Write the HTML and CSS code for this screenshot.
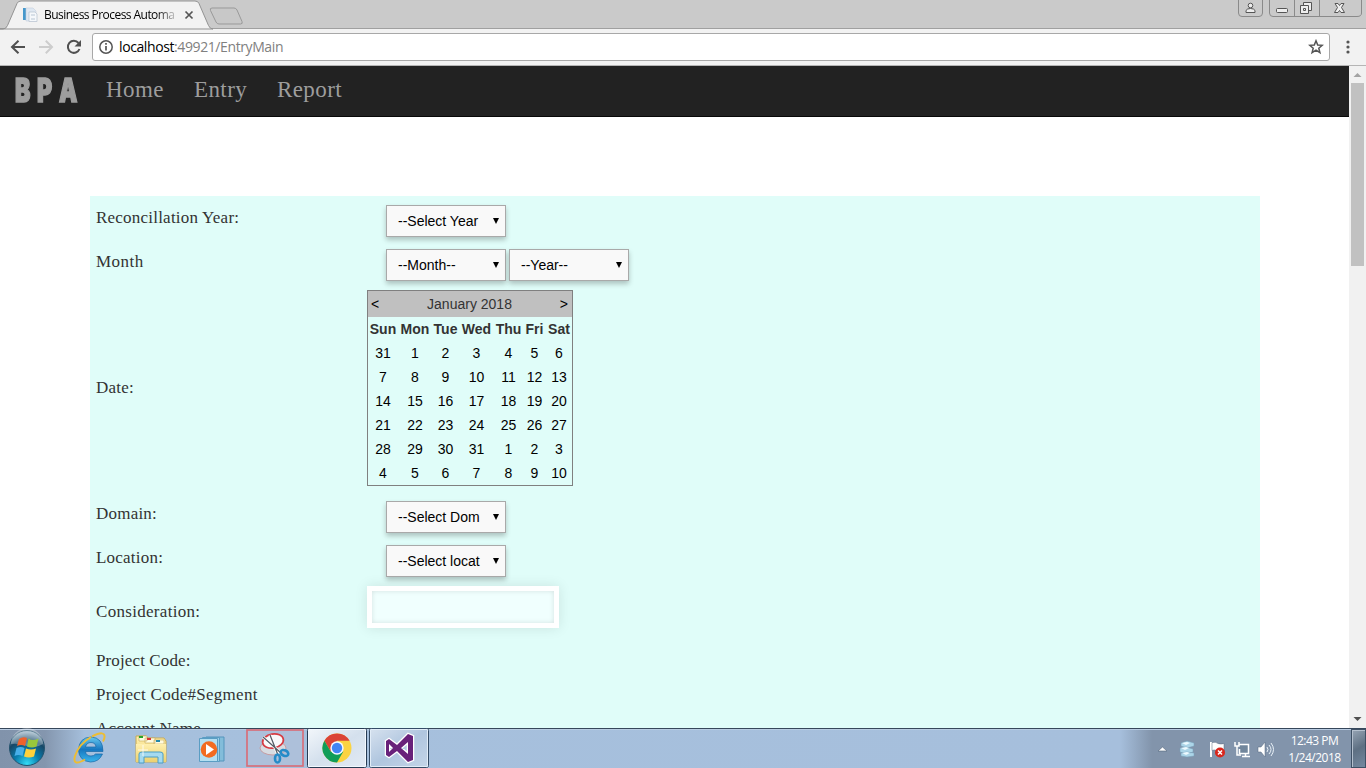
FILE: index.html
```html
<!DOCTYPE html>
<html lang="en">
<head>
<meta charset="utf-8">
<title>Business Process Automation</title>
<link rel="stylesheet" href="styles.css">
</head>
<body>
<div class="screen">
  <header class="tabstrip">
    <svg class="tab-shapes" width="250" height="28" viewBox="0 0 250 28">
      <path d="M0 28.5H3Q6 28.500 7.500 25L17 3Q18 .5 21 .5H195Q198 .5 199 3L208.500 25Q210 28.500 213 28.500Z" fill="#f2f2f2" stroke="#939393"/>
      <path d="M212 7.500H234Q236 7.500 237 9.500L242 21Q243 23.500 240.500 23.500H219Q217 23.500 216 21.500L210.500 10Q209.500 7.500 212 7.500Z" fill="#c8c8c8" stroke="#999"/>
    </svg>
    <div class="tab">
      <svg width="16" height="16" viewBox="0 0 16 16"><path d="M1 1h3v12H1z" fill="#4598cc"/><path d="M4 1h7l3 3v10H4z" fill="#dfe8f2" stroke="#c4cfdb" stroke-width=".6"/><path d="M8 5h5l2 2v7.500H7V5z" fill="#f5f8fb" stroke="#b6c2cf" stroke-width=".7"/><path d="M9 8h4M9 12h4" stroke="#b8c6d4"/></svg>
      <span class="tab-title">Business Process Automa</span>
      <svg class="tab-close" width="10" height="10" viewBox="0 0 10 10"><path d="M1.500 1.500l7 7M8.500 1.500l-7 7" stroke="#555" stroke-width="1.700"/></svg>
    </div>
    <svg class="window-buttons" width="130" height="18" viewBox="0 0 130 18">
      <path d="M3.500 -1V13Q3.500 16.500 7 16.500H24Q27.500 16.500 27.500 13V-1M34.500 -1V13Q34.500 16.500 38 16.500H122Q126.500 16.500 126.500 13V-1M59.500 0V16M84.500 0V16" fill="none" stroke="#8a8a8a"/>
      <g fill="#eee" stroke="#555"><circle cx="15.500" cy="5.500" r="2.300"/><path d="M11 12.500V10.500Q12 8.500 15.500 8.500T20 10.500V12.500Z"/><rect x="41.500" y="8.500" width="11" height="4" rx="1"/><path d="M68.500 2.500h8v8h-8z"/><path d="M65.500 5.500h8v8h-8z"/><path d="M68.500 8.500h2v2h-2z"/><path d="M100 3.500h3l1.500 2 1.500-2h3l-2.500 4 3 5h-3.500l-1.500-2-1.500 2h-3.500l3-5z"/></g>
    </svg>
  </header>
  <div class="toolbar">
    <svg class="nav-icons" width="92" height="37" viewBox="0 0 92 37">
      <g fill="none" stroke-width="2"><path d="M25 19H12.500M18.500 12.700L12 19L18.500 25.300" stroke="#505050"/><path d="M39 19H51.500M45.800 12.700L52 19L45.800 25.300" stroke="#cdcdcd"/><path d="M78.500 15A6 6 0 1 0 79.500 21" stroke="#505050"/></g><path d="M81 12v6.500h-6.500z" fill="#505050"/>
    </svg>
    <div class="address">
      <svg width="16" height="16" viewBox="0 0 16 16"><circle cx="8" cy="8" r="6.200" fill="none" stroke="#555" stroke-width="1.500"/><path d="M8 7v4.500M8 4v1.700" stroke="#555" stroke-width="1.700"/></svg>
      <span class="url"><b>localhost</b>:49921/EntryMain</span>
      <svg class="star" width="16" height="16" viewBox="0 0 16 16"><path d="M8 1.800l1.700 4.200 4.600.3-3.500 2.900 1.100 4.400L8 11.200l-3.900 2.400 1.100-4.400L1.700 6.300 6.300 6z" fill="none" stroke="#555" stroke-width="1.500"/></svg>
    </div>
    <svg class="menu" width="6" height="14" viewBox="0 0 6 14"><g fill="#555"><circle cx="3" cy="2" r="1.600"/><circle cx="3" cy="7" r="1.600"/><circle cx="3" cy="12" r="1.600"/></g></svg>
  </div>

  <div class="viewport">
    <main class="page">
      <nav class="navbar">
        <span class="brand"><span>B</span><span>P</span><span>A</span></span>
        <a class="home">Home</a><a class="entry">Entry</a><a class="report">Report</a>
      </nav>
      <section class="form">
        <div class="row"><label class="l-year">Reconcillation Year:</label><div class="selects"><div class="select"><span>--Select Year</span></div></div></div>
        <div class="row"><label class="l-month">Month</label><div class="selects"><div class="select"><span>--Month--</span></div><div class="select"><span>--Year--</span></div></div></div>
        <div class="row row-date"><label class="l-date">Date:</label>
          <div class="calendar">
            <div class="cal-head"><span>&lt;</span><span class="cal-title">January 2018</span><span>&gt;</span></div>
            <div class="cal-grid">
              <b>Sun</b><b>Mon</b><b>Tue</b><b>Wed</b><b>Thu</b><b>Fri</b><b>Sat</b>
              <i>31</i><i>1</i><i>2</i><i>3</i><i>4</i><i>5</i><i>6</i>
              <i>7</i><i>8</i><i>9</i><i>10</i><i>11</i><i>12</i><i>13</i>
              <i>14</i><i>15</i><i>16</i><i>17</i><i>18</i><i>19</i><i>20</i>
              <i>21</i><i>22</i><i>23</i><i>24</i><i>25</i><i>26</i><i>27</i>
              <i>28</i><i>29</i><i>30</i><i>31</i><i>1</i><i>2</i><i>3</i>
              <i>4</i><i>5</i><i>6</i><i>7</i><i>8</i><i>9</i><i>10</i>
            </div>
          </div>
        </div>
        <div class="row"><label class="l-domain">Domain:</label><div class="selects"><div class="select"><span>--Select Dom</span></div></div></div>
        <div class="row"><label class="l-location">Location:</label><div class="selects"><div class="select"><span>--Select locat</span></div></div></div>
        <div class="row row-text"><label class="l-cons">Consideration:</label><div class="textbox"></div></div>
        <div class="row row-short"><label class="l-code">Project Code:</label></div>
        <div class="row row-short"><label class="l-seg">Project Code#Segment</label></div>
        <div class="row row-short"><label class="l-acct">Account Name</label></div>
      </section>
    </main>
    <aside class="scrollbar">
      <svg width="17" height="17" viewBox="0 0 17 17"><path d="M4.500 11h8L8.500 7z" fill="#a3a3a3"/></svg>
      <div class="thumb"></div>
      <svg class="down" width="17" height="17" viewBox="0 0 17 17"><path d="M4.500 6h8l-4 4z" fill="#505050"/></svg>
    </aside>
  </div>

  <footer class="taskbar">
    <svg class="apps" width="440" height="40" viewBox="0 0 440 40">
      <defs>
        <radialGradient id="orb" cx=".5" cy=".95" r=".9"><stop offset="0" stop-color="#35dcf5"/><stop offset=".4" stop-color="#087cad"/><stop offset=".75" stop-color="#174766"/><stop offset="1" stop-color="#91adc0"/></radialGradient>
        <linearGradient id="btn" x2="1" y2="1"><stop offset="0" stop-color="#f3f7fb"/><stop offset=".5" stop-color="#d4e0ed"/><stop offset="1" stop-color="#e2eaf4"/></linearGradient>
        <linearGradient id="btn2" x2="1" y2="1"><stop offset="0" stop-color="#d7e2ef"/><stop offset=".5" stop-color="#b0c6df"/><stop offset="1" stop-color="#c4d5e8"/></linearGradient>
        <linearGradient id="folder" x2="0" y2="1"><stop offset="0" stop-color="#fff0af"/><stop offset="1" stop-color="#ecd16f"/></linearGradient>
        <linearGradient id="ie" x2="0" y2="1"><stop offset="0" stop-color="#67c9ef"/><stop offset=".5" stop-color="#1777c0"/><stop offset="1" stop-color="#39b5ec"/></linearGradient>
      </defs>
      <circle cx="27" cy="20" r="17.500" fill="url(#orb)" stroke="#24536e"/>
      <path d="M11 16A16 16 0 0 1 43 16Q35 21 27 18T11 16Z" fill="#fff" opacity=".3"/>
      <path d="M19 11q4-3 8-1l-2 8q-4-2-8 0z" fill="#ee622c"/><path d="M28.500 10.500q4 3 10 0l-2 8q-5 2-9.500 0z" fill="#99c83b"/><path d="M16.500 20q4-2 8 0l-2 8q-4-2-8 0z" fill="#48afe9"/><path d="M26 20.500q5 2 10 0l-2 8q-5 2-10 0z" fill="#ffd13b"/>
      <path fill-rule="evenodd" d="M103 23.500H85.500Q86 28 91 28Q94 28 95.500 26H102.500Q99 34 90.500 34Q79 33 78.500 22Q79 9.500 91 9Q103 9.500 103 23.500ZM85.500 19H96Q95.500 14.500 91 14.500Q86.500 14.500 85.500 19Z" fill="url(#ie)" stroke="#1767a6" stroke-width=".7"/><path d="M92 8.500Q105 2 104.500 9Q104.500 11 103 13.500M91 9Q79 16 75 28Q72 39 85 31.500" fill="none" stroke="#edbd34" stroke-width="2"/>
      <path d="M136 12V8H146L148 10H164L166 13V34H136Z" fill="url(#folder)" stroke="#c8aa54"/><path d="M139 8h8v5h-8zM145 10h10v5h-10zM154 12h10v4h-10z" fill="#fffbe0" stroke="#c8aa54" stroke-width=".6"/><path d="M139 8h4v2h-4z" fill="#28a528"/><path d="M147 10h4v2h-4z" fill="#d33"/><path d="M156 12h4v2h-4z" fill="#28a"/><path d="M136 16h30v18h-30z" fill="url(#folder)"/>
      <path d="M139 35V26Q139 24 142 24H160Q163 24 163 26V35H158V29H144V35Z" fill="#a5daef" stroke="#4b9ec6"/><path d="M143 17v11M138 22h10" stroke="#fff" opacity=".8"/>
      <path d="M206 9h18v24h-18z" fill="#83bdda" stroke="#5595bd"/><path d="M202.500 9.500h17v24h-17z" fill="#9bcee7" stroke="#5a9dc3"/><path d="M199.500 10.500h18v23h-18z" fill="#b4dff1" stroke="#5a9dc3"/><circle cx="209" cy="21.500" r="8.300" fill="#f26b20"/><path d="M206 16v11l8-5.500z" fill="#fff"/>
      <rect x="247" y="2" width="56" height="36" fill="#adc0da" stroke="#d66f7b" stroke-width="1.700"/>
      <ellipse cx="273" cy="20" rx="13" ry="7" fill="#d7dce2" stroke="#c69ca2"/><ellipse cx="273" cy="13" rx="10.500" ry="7" fill="#f8f9fa" stroke="#d63c43" stroke-width="1.700" transform="rotate(-10 273 13)"/><path d="M263 9L281 25M270 7L278 27" stroke="#fff" stroke-width="3"/><path d="M263 9L281 25M270 7L278 27" stroke="#555e67" stroke-width="1.300"/><g fill="none" stroke="#258bc8" stroke-width="2.600"><ellipse cx="284.500" cy="25" rx="4" ry="2.700" transform="rotate(25 284.500 25)"/><ellipse cx="277.500" cy="30.500" rx="2.500" ry="4"/></g>
      <rect x="307.500" y=".5" width="59" height="39" rx="2" fill="url(#btn)" stroke="#263b53"/><path d="M308.500 38.500V1.500H365.500V38.500Z" fill="none" stroke="#f3f8fe"/>
      <circle cx="337" cy="20" r="14.500" fill="#fbd341"/><path d="M324.400 12.700A14.500 14.500 0 0 1 349.600 12.700H337L330.700 23.600Z" fill="#db4437"/><path d="M324.400 12.700A14.500 14.500 0 0 0 337 34.500L343.300 23.600H330.700Z" fill="#109d58"/><circle cx="337" cy="20" r="6.700" fill="#f5f8ff"/><circle cx="337" cy="20" r="5.200" fill="#4285f4"/>
      <rect x="369.500" y=".5" width="59" height="39" rx="2" fill="url(#btn2)" stroke="#344c67"/><path d="M370.500 38.500V1.500H427.500V38.500Z" fill="none" stroke="#e2edf8"/>
      <path fill-rule="evenodd" d="M386 13L389 11L397 17L408 6L413 8V32L408 34L397 23L389 29L386 27ZM389 16V24L393 20ZM401 20L408 26V14Z" fill="#68217a" stroke="#fff" stroke-width="2.500" paint-order="stroke"/>
    </svg>
    <div class="tray">
      <svg class="tray-icons" width="130" height="39" viewBox="0 0 130 39">
        <path d="M13 22h9l-4.500-4z" fill="#fff" stroke="#53647a" stroke-width=".6"/>
        <path d="M36 14l6-2 7 2v3l-7 2-6-2zM35 19l6-1 7 2v3l-7 2-6-2zM36 24l6-1 7 1v3l-7 1-6-1z" fill="#acd5e8" stroke="#779fb8" stroke-width=".5"/><path d="M37 14l5-1 3 1-4 2zM36 19l5-1 3 1-4 2zM37 24l5-1 3 1-4 2z" fill="#edfaff"/>
        <path d="M66 13V28" stroke="#fff" stroke-width="2"/><path d="M67 13.500q4-1 6 1 3 1 6 0v8q-4 1-7-1-3-1-5 0z" fill="#fff" stroke="#53647a" stroke-width=".5"/><circle cx="75" cy="23.500" r="5" fill="#d9261c"/><path d="M73 21.500l4 4M77 21.500l-4 4" stroke="#fff" stroke-width="1.500"/>
        <path d="M94 15.500H103.500V24.500H94.500V20M97 27.500H105M100.500 25v2" fill="#71869c" stroke="#fff" stroke-width="1.500"/><path d="M90 13v4h4v-4M92 17v9h4" fill="none" stroke="#fff" stroke-width="1.500"/>
        <path d="M113 18h3l4-5v15l-4-5h-3z" fill="#fff" stroke="#52667e" stroke-width=".5"/><path d="M122 18q2 2.500 0 5M124 16q4 4.500 0 9M126 14q5 6.500 0 13" fill="none" stroke="#eaf2f8"/>
      </svg>
      <div class="clock"><span>12:43 PM</span><span>1/24/2018</span></div>
      <div class="desktop-button"></div>
    </div>
  </footer>
</div>
</body>
</html>
```
FILE: styles.css
```css
* { box-sizing: border-box; }
body { margin: 0; overflow: hidden; font-family: "Liberation Sans", Arial, sans-serif; }
svg { display: block; flex: none; }
.screen { width: 1366px; height: 768px; display: flex; flex-direction: column; overflow: hidden; }

.tabstrip { height: 29px; flex: none; background: #cacaca; border-bottom: 1px solid #a0a0a0; display: flex; justify-content: space-between; position: relative; }
.tab-shapes { position: absolute; left: 0; top: 0; height: 29px; overflow: visible; }
.tab { position: relative; width: 200px; height: 28px; padding: 1px 0 0 22px; display: flex; align-items: center; }
.tab-title { width: 133px; margin-left: 6px; white-space: nowrap; -webkit-mask-image: linear-gradient(90deg, #000 112px, transparent 136px); mask-image: linear-gradient(90deg, #000 112px, transparent 136px); font: 12px/18px "Open Sans", sans-serif; letter-spacing: -.55px; }
.tab-close { margin-left: 7px; }
.window-buttons { margin-right: 1px; }

.toolbar { height: 37px; flex: none; background: #f2f2f2; border-bottom: 1px solid #b5b5b5; display: flex; }
.nav-icons { margin-top: -1px; }
.address { width: 1238px; height: 28px; margin-top: 4px; border: 1px solid #a8a8a8; border-radius: 3px; background: #fff; display: flex; align-items: center; padding: 0 5px; }
.url { margin-left: 5px; flex: 1; color: #808080; font: 14px/20px "Open Sans", sans-serif; letter-spacing: -.4px; }
.url b { color: #000; font-weight: 400; }
.menu { margin: 11px 0 0 15px; }

.viewport { flex: 1; min-height: 0; display: flex; }
.page { width: 1349px; height: 662px; overflow: hidden; background: #fff; }
.navbar { height: 51px; background: #222; border-bottom: 1px solid #080808; display: flex; color: #9d9d9d; font: 23px/48px "Liberation Serif", serif; letter-spacing: .4px; }
.navbar a { display: block; height: 48px; }
.brand { width: 106px; padding-left: 15px; display: flex; font: 900 33px/49px Inter, sans-serif; letter-spacing: 0; }
.brand span { width: 22px; transform: scaleX(.7); transform-origin: left; -webkit-text-stroke: 1.6px #9d9d9d; }
.home { width: 88px; } .entry { width: 83px; }

.form { width: 1170px; margin: 79px 0 0 90px; background: #e0fdf9; }
.row { height: 44px; display: grid; grid-template-columns: 277px 1fr; }
.row label { align-self: center; padding-left: 6px; font: 17px/22px "Liberation Serif", serif; letter-spacing: .22px; color: #333; white-space: nowrap; }
.row .l-month { letter-spacing: .5px; }
.row .l-cons { letter-spacing: .3px; }
.row .l-code { letter-spacing: .12px; }
.row .l-seg { letter-spacing: .27px; }
.row-date { height: 208px; }
.row-text { height: 64px; }
.row-short { height: 34px; }
.selects { display: flex; gap: 3px; padding: 9px 0 0 19px; }
.select { width: 120px; height: 32px; border: 1px solid #a9a9a9; background: #f9f9f9; box-shadow: 0 3px 5px rgba(0,0,0,.23); display: flex; align-items: center; justify-content: space-between; padding: 0 6px 0 11px; font-size: 14px; color: #000; }
.select span { white-space: nowrap; }
.select::after { content: ""; border: 3.5px solid transparent; border-top: 6px solid #000; border-bottom: 0; }
.calendar { width: 206px; height: 196px; margin-top: 6px; border: 1px solid #808080; font-size: 14px; }
.cal-head { height: 26px; padding: 0 4px 0 3px; background: silver; display: flex; align-items: center; justify-content: space-between; }
.cal-title { color: #333; }
.cal-grid { display: grid; grid-template-columns: 30px 34px 27px 35px 29px 23px 26px; grid-auto-rows: 24px; line-height: 24px; text-align: center; }
.cal-grid b { color: #333; }
.cal-grid i { font-style: normal; color: #000; }
.textbox { width: 192px; height: 42px; margin-top: 6px; border: 5px solid #fff; background: #f0fffe; box-shadow: inset 0 0 5px rgba(0,0,0,.12), 0 0 12px rgba(0,0,0,.1); }

.scrollbar { width: 17px; background: #f1f1f1; display: flex; flex-direction: column; }
.thumb { width: 13px; height: 183px; margin-left: 2px; background: #c1c1c1; }
.down { margin-top: auto; }

.taskbar { height: 40px; flex: none; border-top: 1px solid #36475b; box-shadow: inset 0 1px #b9cce2; background: linear-gradient(90deg, #8193ab 0, #8496ae 45px, #a6c0dd 85px, #a6bfdc 1120px, #8294ab 1152px, #8294ab); display: flex; justify-content: space-between; }
.apps { margin-top: -1px; }
.tray { display: flex; }
.clock { width: 73px; padding-top: 3px; color: #fff; text-align: center; display: flex; flex-direction: column; font: 12px/17px "Open Sans", sans-serif; letter-spacing: -.5px; }
.tray-icons { margin-right: 3px; }
.desktop-button { width: 15px; border: 1px solid #3e5065; background: linear-gradient(150deg, #96a4b4, #5e7083 50%, #74889f); box-shadow: inset 1px 1px #b4c0ce; }
```
